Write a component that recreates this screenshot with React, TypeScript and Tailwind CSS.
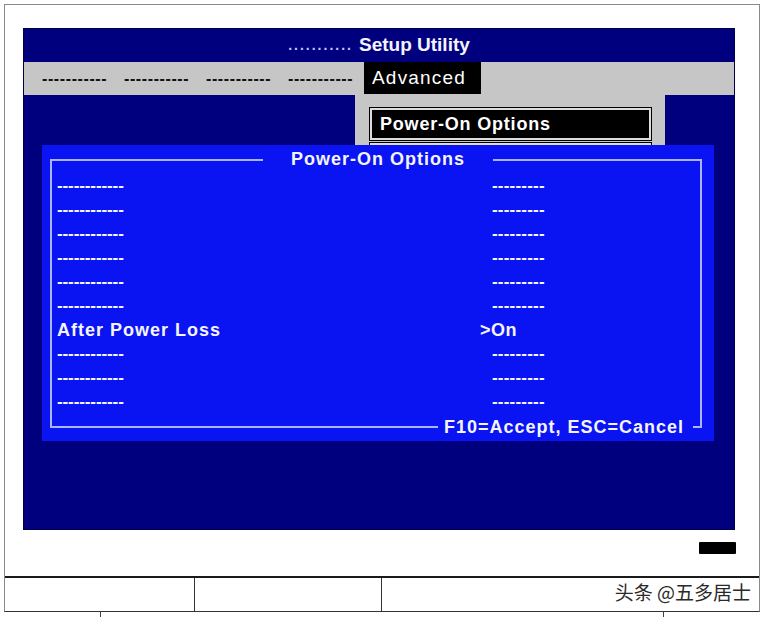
const rows = [
  { label: "------------", value: "---------" },
  { label: "------------", value: "---------" },
  { label: "------------", value: "---------" },
  { label: "------------", value: "---------" },
  { label: "------------", value: "---------" },
  { label: "------------", value: "---------" },
  { label: "After Power Loss", value: ">On" },
  { label: "------------", value: "---------" },
  { label: "------------", value: "---------" },
  { label: "------------", value: "---------" },
];

const menu = ["-----------", "-----------", "-----------", "-----------"];

const font = { fontFamily: '"Liberation Sans", Arial, sans-serif' };

function DialogRow({ label, value }: { label: string; value: string }) {
  const isDash = label.startsWith("-");
  return (
    <div className="flex h-[24px] items-center text-[#f4f4ff]">
      <div className="w-[423px]">
        {isDash ? (
          <span className="text-[17px] font-bold tracking-[-0.1px]">{label}</span>
        ) : (
          <span className="text-[18px] font-bold tracking-[1px]">{label}</span>
        )}
      </div>
      {value.startsWith("-") ? (
        <span className="ml-[12px] text-[17px] font-bold tracking-[0.2px]">{value}</span>
      ) : (
        <span className="text-[18px] font-bold tracking-[0.5px]">{value}</span>
      )}
    </div>
  );
}

export default function App() {
  return (
    <div className="h-[618px] w-[768px] overflow-hidden bg-white" style={font}>
      <div className="ml-[4px] mt-[4px] flex h-[608px] w-[756px] flex-col border border-[#8a8a8a] border-b-[#333]">
        {/* screen */}
        <div className="relative ml-[18px] mt-[23px] flex h-[502px] w-[712px] flex-col border border-[#00004a] bg-[#00007e]">
          <div className="flex h-[33px] items-center justify-center gap-[6px]">
            <span className="text-[14px] font-bold tracking-[2px] text-[#c4c8ff]">...........</span>
            <span className="text-[19px] font-bold text-[#f4f4ff]">Setup Utility</span>
          </div>
          <div className="flex h-[33px] items-stretch bg-[#c6c6c6] pl-[18px]">
            <div className="flex items-center gap-[15px]">
              {menu.map((m, i) => (
                <span key={i} className="w-[67px] whitespace-nowrap text-[16px] font-bold tracking-[0.6px] text-[#111]">
                  {m}
                </span>
              ))}
            </div>
            <div className="mb-[1px] ml-[9px] flex w-[117px] items-center bg-black px-[8px] text-[19px] tracking-[1.2px] text-white">
              Advanced
            </div>
          </div>

          {/* dropdown under Advanced */}
          <div className="absolute left-[331px] top-[66px] h-[100px] w-[310px] bg-[#c6c6c6] pl-[15px] pt-[13px]">
            <div className="flex h-[32px] w-[281px] items-center border-2 border-[#dcdcdc] bg-black px-[8px] text-[18px] font-bold tracking-[0.8px] text-white shadow-[0_0_0_1px_#000]">
              Power-On Options
            </div>
            <div className="mt-[3px] h-[32px] w-[281px] border-2 border-[#dcdcdc] bg-black shadow-[0_0_0_1px_#000]" />
          </div>

          {/* Power-On Options dialog */}
          <div className="absolute left-[18px] top-[116px] h-[296px] w-[672px] bg-[#0a14f2] pl-[8px] pr-[12px] pt-[14px]">
            <div className="relative h-[269px] border-2 border-[#aab4ff] pl-[5px] pt-[13px]">
              <div className="absolute -top-[13px] left-[211px] bg-[#0a14f2] px-[28px] text-[18px] font-bold leading-[22px] tracking-[1px] text-[#f4f4ff]">
                Power-On Options
              </div>
              {rows.map((r, i) => (
                <DialogRow key={i} label={r.label} value={r.value} />
              ))}
              <div className="absolute -bottom-[12px] right-[7px] bg-[#0a14f2] pl-[6px] pr-[9px] text-[18px] font-bold leading-[22px] tracking-[1px] text-[#f4f4ff]">
                F10=Accept, ESC=Cancel
              </div>
            </div>
          </div>
        </div>

        {/* area below screen */}
        <div className="flex h-[46px] justify-end pr-[23px] pt-[12px]">
          <div className="h-[12px] w-[37px] rounded-[1px] bg-black" />
        </div>
        <div className="flex flex-1 border-t-2 border-[#1a1a1a]">
          <div className="w-[190px] border-r border-[#333]" />
          <div className="w-[187px] border-r border-[#333]" />
          <div className="flex flex-1 items-center justify-end pb-[4px] pr-[8px]">
            <span
              className="text-[19px] text-[#2a2a2a]"
              style={{
                fontFamily: '"Noto Sans CJK SC", "Liberation Sans", sans-serif',
                textShadow: "1px 1px 0 #fff, -1px -1px 0 #fff, 1px -1px 0 #fff, -1px 1px 0 #fff",
              }}
            >
              头条 @五多居士
            </span>
          </div>
        </div>
      </div>
      <div className="relative h-[6px]">
        <div className="absolute left-[100px] top-0 h-[5px] w-px bg-[#444]" />
        <div className="absolute left-[663px] top-0 h-[5px] w-px bg-[#444]" />
      </div>
    </div>
  );
}
